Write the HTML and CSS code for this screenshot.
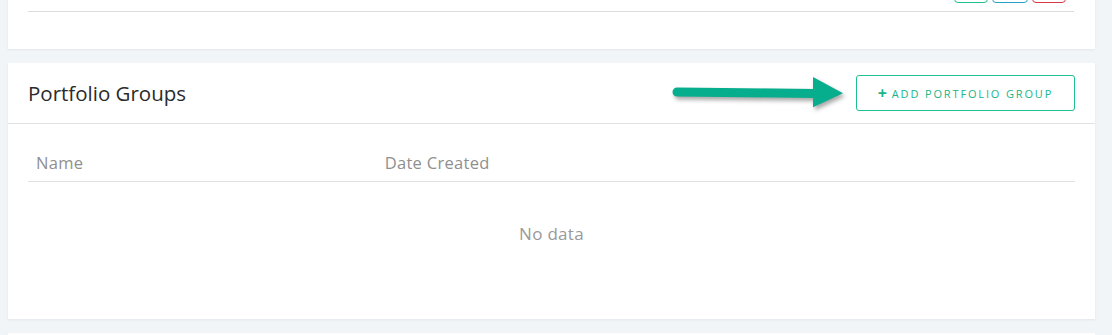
FILE: index.html
```html
<!DOCTYPE html>
<html lang="en">
<head>
    <meta charset="UTF-8">
    <meta name="viewport" content="width=device-width, initial-scale=1.0">
    <title>Portfolio Groups</title>
    <link rel="stylesheet" href="styles.css">
</head>
<body>
    <div class="page">
        <div class="card card-top">
            <div class="toolbar">
                <button class="btn-small green" type="button"></button>
                <button class="btn-small blue" type="button"></button>
                <button class="btn-small red" type="button"></button>
            </div>
        </div>

        <div class="card groups-card">
            <div class="card-header">
                <h2>Portfolio Groups</h2>
                <button class="btn-add" type="button"><span class="plus">+</span>ADD PORTFOLIO GROUP</button>
            </div>
            <div class="card-body">
                <table class="groups-table">
                    <thead>
                        <tr>
                            <th class="col-name">Name</th>
                            <th>Date Created</th>
                        </tr>
                    </thead>
                    <tbody>
                        <tr>
                            <td class="empty" colspan="2">No data</td>
                        </tr>
                    </tbody>
                </table>
            </div>

            <!-- annotation arrow pointing at the button -->
            <svg class="arrow" width="190" height="44" viewBox="0 0 190 44">
                <line x1="17" y1="22" x2="156" y2="23.5" stroke="#06ae8d" stroke-width="9" stroke-linecap="round"/>
                <polygon points="153,7 183,23.3 153,37.3" fill="#06ae8d"/>
            </svg>
        </div>

        <div class="card card-next"></div>
    </div>
</body>
</html>
```

FILE: styles.css
```css
body {
    margin: 0;
    background-color: #f2f5f8;
    font-family: 'Open Sans', Arial, sans-serif;
    overflow: hidden;
    height: 335px;
}

.page {
    padding-left: 8px;
    width: 1087px;
}

.card {
    background-color: #fff;
    box-shadow: 0 1px 2px rgba(40, 60, 90, 0.08);
    margin-bottom: 14px;
    position: relative;
}

.card-top {
    margin-top: -30px;
    padding: 0 21px 37px 20px;
}

.toolbar {
    display: flex;
    justify-content: flex-end;
    gap: 4px;
    padding: 0 8px 8px 0;
    border-bottom: 1px solid #dcdcdc;
}

.btn-small {
    height: 33px;
    width: 34px;
    background: #fff;
    border: 1px solid;
    border-radius: 4px;
    padding: 0;
}

.btn-small.green { border-color: #20bf8f; }
.btn-small.blue { border-color: #2a9fc5; width: 36px; }
.btn-small.red { border-color: #d9384a; }

.card-header {
    display: flex;
    justify-content: space-between;
    align-items: center;
    padding: 12px 20px;
    border-bottom: 1px solid #e2e2e2;
}

.card-header h2 {
    margin: 0;
    font-size: 20.5px;
    font-weight: 400;
    color: #2b2b2b;
}

.btn-add {
    height: 36px;
    width: 219px;
    background: #fff;
    border: 1px solid #1fbf90;
    border-radius: 3px;
    color: #1ab487;
    font-family: inherit;
    font-size: 11px;
    letter-spacing: 1.85px;
    cursor: pointer;
}

.btn-add .plus {
    font-size: 16px;
    font-weight: 700;
    margin-right: 3px;
    vertical-align: -1px;
}

.card-body {
    padding: 20px 20px 35px;
}

.groups-table {
    width: 100%;
    border-collapse: collapse;
}

.groups-table th {
    text-align: left;
    font-weight: 400;
    font-size: 16.5px;
    letter-spacing: 0.3px;
    color: #8f8f8f;
    padding: 0 8px;
    height: 37px;
    border-bottom: 1px solid #e2e2e2;
}

.groups-table .col-name {
    width: 33.3%;
}

.groups-table .empty {
    text-align: center;
    height: 100px;
    font-size: 17px;
    letter-spacing: 0.3px;
    color: #999;
}

.arrow {
    position: absolute;
    left: 652px;
    top: 7px;
    filter: drop-shadow(2px 3px 2px rgba(0, 0, 0, 0.35));
}

.card-next {
    height: 40px;
}
```
